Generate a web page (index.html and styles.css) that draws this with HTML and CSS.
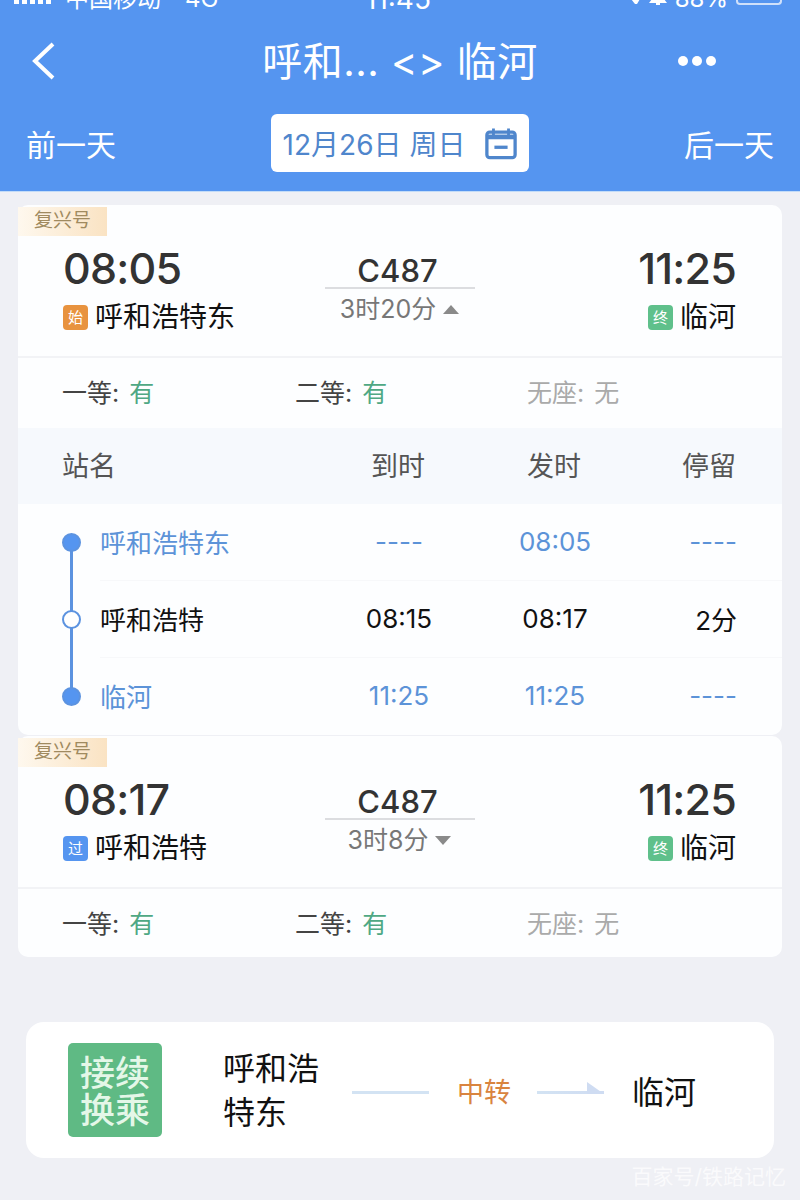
FILE: index.html
```html
<!DOCTYPE html>
<html lang="zh-CN">
<head>
    <meta charset="UTF-8">
    <title>呼和... &lt;&gt; 临河</title>
    <link rel="stylesheet" href="styles.css">
</head>
<body>
    <header class="top">
        <div class="status">
            <div class="status-left">
                <span class="signal"><i></i><i></i><i></i><i></i><i></i></span>
                <span>中国移动</span>
                <span class="net">4G</span>
            </div>
            <span class="clock">11:45</span>
            <div class="status-right">
                <svg class="st-icon" width="12" height="6" viewBox="0 0 12 6"><path d="M2 0h9L8 5H6z" fill="#fff"/></svg>
                <svg class="st-icon" width="18" height="6" viewBox="0 0 18 6"><path d="M3 0h12l3 4H0zM7 4h4v2H7z" fill="#fff"/></svg>
                <span>88%</span>
                <span class="battery"></span>
            </div>
        </div>
        <div class="nav">
            <svg class="back" width="26" height="38" viewBox="0 0 26 38"><path d="M23 2 L5 19 L23 36" fill="none" stroke="#fff" stroke-width="4"/></svg>
            <h1>呼和... &lt;&gt; 临河</h1>
            <div class="more"><i></i><i></i><i></i></div>
        </div>
        <div class="dates">
            <span>前一天</span>
            <div class="date-pick">
                <span>12月26日 周日</span>
                <svg width="32" height="33" viewBox="0 0 34 34"><rect x="2" y="5" width="30" height="27" rx="3" fill="none" stroke="#4f86cc" stroke-width="3.5"/><path d="M2 10h30" stroke="#4f86cc" stroke-width="5"/><path d="M9 1v7M25 1v7" stroke="#4f86cc" stroke-width="3"/><path d="M10 21h14" stroke="#4f86cc" stroke-width="3.5"/></svg>
            </div>
            <span>后一天</span>
        </div>
    </header>

    <main class="list">
        <section class="card">
            <span class="tag">复兴号</span>
            <div class="train">
                <div class="side">
                    <div class="time">08:05</div>
                    <div class="station"><span class="mark orange">始</span>呼和浩特东</div>
                </div>
                <div class="mid">
                    <div class="code">C487</div>
                    <div class="dur">3时20分<span class="caret up"></span></div>
                </div>
                <div class="side right">
                    <div class="time">11:25</div>
                    <div class="station"><span class="mark green">终</span>临河</div>
                </div>
            </div>
            <div class="seats">
                <span>一等: <b>有</b></span>
                <span>二等: <b>有</b></span>
                <span class="none">无座: 无</span>
            </div>
            <div class="stops-head">
                <span class="c-name">站名</span>
                <span class="c-col">到时</span>
                <span class="c-col">发时</span>
                <span class="c-last">停留</span>
            </div>
            <div class="stops">
                <div class="stop end first">
                    <span class="dot"></span>
                    <div class="stop-row">
                        <span class="c-name">呼和浩特东</span>
                        <span class="c-col">----</span>
                        <span class="c-col">08:05</span>
                        <span class="c-last">----</span>
                    </div>
                </div>
                <div class="stop">
                    <span class="dot"></span>
                    <div class="stop-row">
                        <span class="c-name">呼和浩特</span>
                        <span class="c-col">08:15</span>
                        <span class="c-col">08:17</span>
                        <span class="c-last">2分</span>
                    </div>
                </div>
                <div class="stop end last">
                    <span class="dot"></span>
                    <div class="stop-row">
                        <span class="c-name">临河</span>
                        <span class="c-col">11:25</span>
                        <span class="c-col">11:25</span>
                        <span class="c-last">----</span>
                    </div>
                </div>
            </div>
        </section>

        <section class="card">
            <span class="tag">复兴号</span>
            <div class="train">
                <div class="side">
                    <div class="time">08:17</div>
                    <div class="station"><span class="mark blue">过</span>呼和浩特</div>
                </div>
                <div class="mid">
                    <div class="code">C487</div>
                    <div class="dur">3时8分<span class="caret down"></span></div>
                </div>
                <div class="side right">
                    <div class="time">11:25</div>
                    <div class="station"><span class="mark green">终</span>临河</div>
                </div>
            </div>
            <div class="seats">
                <span>一等: <b>有</b></span>
                <span>二等: <b>有</b></span>
                <span class="none">无座: 无</span>
            </div>
        </section>

        <section class="transfer">
            <div class="badge">接续<br>换乘</div>
            <div class="from">呼和浩<br>特东</div>
            <span class="line"></span>
            <span class="via">中转</span>
            <span class="line arrow"></span>
            <div class="to">临河</div>
        </section>
    </main>
    <div class="credit">百家号/铁路记忆</div>
</body>
</html>
```
FILE: styles.css
```css
* {
    box-sizing: border-box;
}
body {
    margin: 0;
    height: 1200px;
    overflow: hidden;
    font-family: "Inter", "Noto Sans CJK SC", sans-serif;
    background-color: #eff0f5;
    color: #111;
    position: relative;
}
.top {
    height: 192px;
    background-color: #5595f0;
    color: #fff;
    border-bottom: 1px solid #c3dcf8;
}
.status {
    height: 12px;
    padding: 0 18px 0 14px;
    display: grid;
    grid-template-columns: 1fr auto 1fr;
    grid-template-rows: 12px;
    align-items: end;
    font-size: 24px;
    line-height: 26px;
}
.status-left, .status-right {
    display: flex;
    align-items: flex-end;
    gap: 12px;
}
.status-right {
    justify-content: flex-end;
    gap: 8px;
}
.clock {
    font-size: 28px;
}
.net {
    margin-left: 12px;
}
.signal {
    display: flex;
    gap: 3px;
    margin-right: 2px;
    margin-bottom: 8px;
}
.signal i {
    width: 5px;
    height: 5px;
    background-color: #fff;
}
.st-icon {
    margin-bottom: 7px;
}
.battery {
    width: 46px;
    height: 6px;
    margin-bottom: 7px;
    border: 2px solid #cfe0fa;
    border-top: none;
    border-radius: 0 0 4px 4px;
}
.nav {
    height: 102px;
    padding: 0 30px 4px;
    display: grid;
    grid-template-columns: 1fr auto 1fr;
    align-items: center;
}
.nav h1 {
    margin: 0 0 4px;
    font-size: 40px;
    font-weight: 400;
    letter-spacing: 0.5px;
}
.more {
    display: flex;
    justify-content: flex-end;
    gap: 4px;
    margin-right: 54px;
}
.more i {
    width: 10px;
    height: 10px;
    border-radius: 50%;
    background-color: #fff;
}
.dates {
    padding: 0 26px;
    display: flex;
    align-items: center;
    justify-content: space-between;
    font-size: 30px;
}
.date-pick {
    width: 258px;
    height: 58px;
    border-radius: 6px;
    background-color: #fff;
    color: #4f86cc;
    display: flex;
    align-items: center;
    justify-content: center;
    gap: 20px;
    font-size: 28px;
}
.list {
    padding: 13px 18px 0;
}
.card {
    background-color: #fdfeff;
    border-radius: 10px;
    position: relative;
    margin-bottom: 1px;
}
.tag {
    position: absolute;
    left: 0;
    top: 2px;
    width: 89px;
    height: 29px;
    padding-left: 16px;
    font-size: 19px;
    line-height: 28px;
    color: #a08a5f;
    background: linear-gradient(90deg, #fef8ee, #fae3c3);
}
.train {
    height: 153px;
    padding: 36px 46px 0 45px;
    display: grid;
    grid-template-columns: 1fr 150px 1fr;
    border-bottom: 2px solid #f2f3f6;
}
.time {
    font-size: 43px;
    font-weight: 450;
    letter-spacing: -0.8px;
    line-height: 54px;
    color: #333;
}
.station {
    display: flex;
    align-items: center;
    font-size: 28px;
    line-height: 42px;
    margin-top: 1px;
}
.mark {
    width: 25px;
    height: 25px;
    margin-right: 7px;
    border-radius: 4px;
    color: #fff;
    font-size: 15px;
    line-height: 25px;
    text-align: center;
}
.orange {
    background-color: #e8933f;
}
.green {
    background-color: #5fc08b;
}
.blue {
    background-color: #5595f0;
}
.side.right {
    display: flex;
    flex-direction: column;
    align-items: flex-end;
}
.mid {
    margin-top: 5px;
    text-align: center;
}
.code {
    font-size: 31px;
    font-weight: 450;
    line-height: 41px;
    padding: 4px 4px 0 0;
    height: 43px;
    color: #333;
    border-bottom: 2px solid #dcdde0;
}
.dur {
    font-size: 25px;
    line-height: 40px;
    color: #777;
    display: flex;
    justify-content: center;
    align-items: center;
    gap: 7px;
}
.dur .caret {
    width: 0;
    height: 0;
    border-left: 8px solid transparent;
    border-right: 8px solid transparent;
}
.caret.up {
    border-bottom: 9px solid #8a8a8a;
}
.caret.down {
    border-top: 9px solid #8a8a8a;
}
.seats {
    height: 68px;
    padding: 0 0 3px 44px;
    display: grid;
    grid-template-columns: 233px 232px 1fr;
    align-items: center;
    font-size: 25px;
    word-spacing: 3px;
    color: #444;
}
.seats b {
    font-weight: 400;
    color: #4fa884;
}
.seats .none {
    color: #aaa;
}
.stops-head {
    height: 76px;
    margin-top: 2px;
    padding: 0 46px 4px 44px;
    background-color: #f6f9fd;
    display: flex;
    align-items: center;
    font-size: 27px;
    color: #555;
}
.c-name {
    flex: 1;
}
.c-col {
    width: 156px;
    text-align: center;
}
.c-last {
    width: 104px;
    text-align: right;
}
.stop {
    height: 77px;
    padding-left: 82px;
    position: relative;
}
.stop-row {
    height: 100%;
    padding: 0 45px 2px 0;
    display: flex;
    align-items: center;
    font-size: 26px;
    border-bottom: 1px solid #f7f8fa;
}
.stop:last-child .stop-row {
    border-bottom: none;
}
.stop.end .stop-row {
    color: #5c93d8;
}
.stop::before {
    content: "";
    position: absolute;
    left: 52px;
    top: 0;
    bottom: 0;
    width: 3px;
    background-color: #5c93e0;
}
.stop.first::before {
    top: 38px;
}
.stop.last::before {
    bottom: 38px;
}
.dot {
    position: absolute;
    left: 44px;
    top: 29px;
    width: 19px;
    height: 19px;
    border-radius: 50%;
    border: 2px solid #5c93e0;
    background-color: #fff;
    z-index: 1;
}
.stop.end .dot {
    background-color: #5595f0;
}
.transfer {
    margin: 65px 8px 0;
    height: 136px;
    border-radius: 18px;
    background-color: #fff;
    padding-left: 42px;
    display: flex;
    align-items: center;
}
.badge {
    width: 94px;
    height: 94px;
    border-radius: 5px;
    background-color: #5fba84;
    color: #e4f7e8;
    font-size: 35px;
    font-weight: 500;
    line-height: 37px;
    text-align: center;
    padding-top: 12px;
}
.from {
    margin: 2px 0 0 61px;
    width: 129px;
    font-size: 32px;
    line-height: 44px;
}
.line {
    width: 77px;
    height: 3px;
    margin-top: 4px;
    background-color: #d3e3f3;
}
.line.arrow {
    width: 67px;
    background: linear-gradient(90deg, #d3e3f3, #cfdcf2);
    position: relative;
}
.line.arrow::after {
    content: "";
    position: absolute;
    right: 0;
    bottom: 0;
    border-right: 17px solid transparent;
    border-bottom: 12px solid #cfdcf2;
}
.via {
    margin: 0 26px 0 28px;
    font-size: 27px;
    color: #d9843f;
}
.to {
    margin-left: 28px;
    font-size: 32px;
}
.credit {
    position: absolute;
    right: 14px;
    bottom: 10px;
    font-size: 21px;
    color: #fff;
    opacity: 0.7;
}
```
